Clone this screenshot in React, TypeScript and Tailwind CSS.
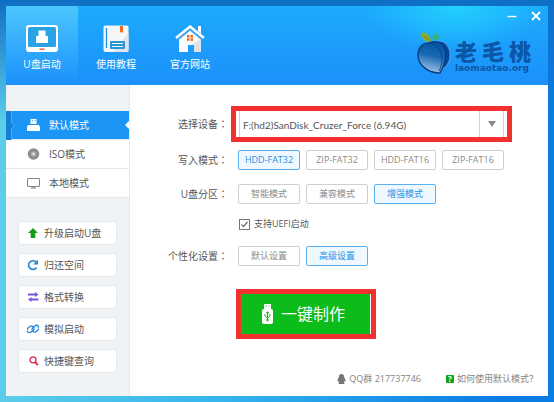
import { useState, type ReactNode } from "react";
import clsx from "clsx";

const modes = ["默认模式", "ISO模式", "本地模式"];
const writeModes = ["HDD-FAT32", "ZIP-FAT32", "HDD-FAT16", "ZIP-FAT16"];
const partitions = ["智能模式", "兼容模式", "增强模式"];
const settings = ["默认设置", "高级设置"];

function UsbScreenIcon() {
  return (
    <svg width="32" height="27" viewBox="0 0 32 27">
      <rect width="32" height="27" rx="3" fill="#fff" />
      <rect x="2" y="2" width="28" height="20" rx="1.5" fill="#2aa3e4" />
      <path d="M12.5 5.5h7v6h-7zM10 11h12v7H10z" fill="#fff" />
      <path d="M13.5 24.2h5" stroke="#e0703a" strokeWidth="1.6" />
    </svg>
  );
}

function BookIcon() {
  return (
    <svg width="26" height="27" viewBox="0 0 26 27">
      <path d="M2.5 0.5h21.5a1.5 1.5 0 0 1 1.5 1.5v23.5a1.5 1.5 0 0 1-1.5 1.5H2.5a2 2 0 0 1-2-2v-22.5a2 2 0 0 1 2-2z" fill="#f4f6f8" />
      <path d="M25.5 8v17.5a1.5 1.5 0 0 1-1.5 1.5H10z" fill="#dfe5ea" />
      <path d="M3.5 3v20" stroke="#1c8de0" strokeWidth="1.2" />
      <path d="M17 1h3v7l-1.5-1.5L17 8z" fill="#ee6a1f" />
      <rect x="7" y="16" width="15" height="8" rx="1" fill="#2a94d8" />
      <path d="M9 18.5h11M9 21.5h11" stroke="#fff" strokeWidth="1.2" />
    </svg>
  );
}

function HouseIcon() {
  return (
    <svg width="30" height="27" viewBox="0 0 30 27">
      <path d="M23 1h3v8l-3-3z" fill="#fff" />
      <path d="M4 13L15 4l11 9v14h-7v-7h-6v7H4z" fill="#fbfbfb" />
      <path d="M26 14v13h-7v-7h-3z" fill="#dde3e8" />
      <path d="M1 13L15 1.5 29 13" fill="none" stroke="#fff" strokeWidth="2.4" />
      <path d="M4 13.7L15 4.8l11 8.9" fill="none" stroke="#2a97e6" strokeWidth="1.2" />
      <path d="M12 10h2.5v2.5H12zM15.5 10H18v2.5h-2.5zM12 13.2h2.5v2.5H12zM15.5 13.2H18v2.5h-2.5z" fill="#ee6a1f" />
    </svg>
  );
}

function PeachLogo() {
  return (
    <svg width="34" height="44" viewBox="0 0 34 44">
      <defs>
        <linearGradient id="peach" x1="0.6" y1="0" x2="0.4" y2="1">
          <stop offset="0" stopColor="#0652a0" />
          <stop offset="0.45" stopColor="#1769b4" />
          <stop offset="1" stopColor="#a9c8e6" />
        </linearGradient>
      </defs>
      <path d="M19 12c7-3 14 3 14 13 0 8-5 14-10 14l-3-4z" fill="#06479a" stroke="#5cb2e8" strokeWidth="0.8" />
      <path d="M12 13c7-3 14-1 16 6 2 9-1 17-5 24C12 43 1 36 1 25c0-7 4-12 11-12z" fill="url(#peach)" stroke="#073c85" strokeWidth="1.4" />
      <path d="M12 13c6 0 13 6 13 15 0 6-1 9-3 13" fill="none" stroke="#073c85" strokeWidth="0.8" />
      <path d="M4 3c4-1 9 1 10 8-5 2-9-1-10-8z" fill="#93ad25" />
      <path d="M6 5l7 6" stroke="#4f7f23" strokeWidth="0.8" />
      <path d="M15 6c1 1 3 0 6-5 0 3 0 4-2 5 2 0 3-1 4-1-1 4-3 5-6 5z" fill="#38b46a" />
    </svg>
  );
}

function DriveIcon() {
  return (
    <svg width="13" height="12" viewBox="0 0 13 12" fill="currentColor">
      <path d="M3.5 0h6v5h-6zM1 6h11l1 2v4H0V8z" />
      <path d="M5 1.8h1M7.5 1.8h1" stroke="#1b96f5" />
    </svg>
  );
}

function DiscIcon() {
  return (
    <svg width="13" height="12" viewBox="0 0 13 12">
      <circle cx="6.5" cy="6" r="5.8" fill="#8d8d8d" />
      <circle cx="6.5" cy="6" r="2.5" fill="#b8b8b8" />
      <circle cx="6.5" cy="6" r="1" fill="#eee" />
    </svg>
  );
}

function MonitorIcon() {
  return (
    <svg width="13" height="12" viewBox="0 0 13 12" fill="none" stroke="#858585">
      <rect x="0.5" y="1.5" width="12" height="8" rx="0.5" />
      <path d="M4 11h5M5 10h3" />
    </svg>
  );
}

const modeIcons = [<DriveIcon />, <DiscIcon />, <MonitorIcon />];

const tabs = [
  { label: "U盘启动", icon: <UsbScreenIcon /> },
  { label: "使用教程", icon: <BookIcon /> },
  { label: "官方网站", icon: <HouseIcon /> },
];

const tools = [
  {
    label: "升级启动U盘",
    icon: <path d="M6 1l5 5H8.300v5H3.700V6H1z" fill="#159a1c" />,
  },
  {
    label: "归还空间",
    icon: (
      <g>
        <path d="M9.5 8.500A4.300 4.300 0 1 1 8.800 2.800" fill="none" stroke="#2688d8" strokeWidth="1.7" />
        <path d="M11 0.500v5H6.200z" fill="#2688d8" />
      </g>
    ),
  },
  {
    label: "格式转换",
    icon: (
      <g fill="#7a55e0">
        <path d="M1 2.500h7V1l3.500 2.500L8 6V4.500H1z" />
        <path d="M11.500 7.500h-7V6L1 8.500 4.500 11V9.500h7z" />
      </g>
    ),
  },
  {
    label: "模拟启动",
    icon: (
      <g fill="none" stroke="#2688d8" strokeWidth="1.3">
        <rect x="-0.300" y="3.800" width="7.500" height="5" rx="2.500" transform="rotate(-40 3.500 6.300)" />
        <rect x="4.800" y="3.200" width="7.500" height="5" rx="2.500" transform="rotate(-40 8.500 5.700)" />
      </g>
    ),
  },
  {
    label: "快捷键查询",
    icon: (
      <g fill="none" stroke="#d82458">
        <circle cx="6" cy="4.800" r="3" strokeWidth="1.3" />
        <path d="M8.200 7.200l2.600 3" strokeWidth="1.9" />
      </g>
    ),
  },
];

// The TC face centres the fullwidth colon in its box
function Colon() {
  return <span className="font-['Noto_Sans_CJK_TC',sans-serif]">：</span>;
}

function Row({ label, children }: { label: string; children: ReactNode }) {
  return (
    <div role="group" aria-label={label} className="flex h-5 items-center">
      <span className="w-[98px] shrink-0 text-right text-[10px]">
        {label}
        <Colon />
      </span>
      <div className="ml-2.5 flex gap-1.5">{children}</div>
    </div>
  );
}

function Options({ items, value, onChange }: { items: string[]; value: string; onChange: (v: string) => void }) {
  return items.map((item) => (
    <button
      key={item}
      onClick={() => onChange(item)}
      className={clsx(
        "h-5 w-[62px] rounded-xs border text-[9px] leading-4 whitespace-nowrap",
        item === value ? "border-[#5cb0f0] bg-[#eff8fe] text-[#2390e8]" : "border-[#cfcfcf] bg-white text-[#8a8a8a]"
      )}
    >
      {item}
    </button>
  ));
}

export default function App() {
  const [tab, setTab] = useState(0);
  const [mode, setMode] = useState(0);
  const [write, setWrite] = useState("HDD-FAT32");
  const [partition, setPartition] = useState("增强模式");
  const [setting, setSetting] = useState("高级设置");
  const [uefi, setUefi] = useState(true);

  return (
    <div className="flex min-h-screen flex-col bg-[linear-gradient(to_bottom,#0f6fc4_0%,#0f6fc400_30%),linear-gradient(to_right,#5ccdea,#35b4ee_40%,#0a7ce4_90%)] p-1.5 font-['Open_Sans','Noto_Sans_CJK_SC',sans-serif] text-[#555]">
      <div className="flex flex-1 flex-col bg-white">
        <header className="flex h-[79px] justify-between bg-[radial-gradient(ellipse_90px_45px_at_83%_0%,#22d0ff,#22d0ff00),linear-gradient(to_bottom,#1dabfc,#1c90fb)]">
          <nav className="flex gap-0.5">
            {tabs.map(({ label, icon }, i) => (
              <button
                key={label}
                onClick={() => setTab(i)}
                className={clsx(
                  "flex w-[72px] flex-col items-center pt-[19px] text-[10px] leading-4 text-white",
                  tab === i && "bg-linear-to-b from-[#4cc6fd] to-[#1c90fb]"
                )}
              >
                {icon}
                <span className="mt-1">{label}</span>
              </button>
            ))}
          </nav>
          <div className="flex flex-col items-end pr-[7px]">
            <div className="flex h-5 items-center gap-3.5 text-white">
              <button aria-label="最小化">
                <svg width="10" height="10" viewBox="0 0 10 10" stroke="currentColor" strokeWidth="1.4">
                  <path d="M0.5 5.5h9" />
                </svg>
              </button>
              <button aria-label="关闭">
                <svg width="10" height="10" viewBox="0 0 10 10" stroke="currentColor" strokeWidth="1.8">
                  <path d="M1 1l8 8M9 1l-8 8" />
                </svg>
              </button>
            </div>
            <div className="mt-1 mr-2.5 flex items-start gap-1 text-[#0b57a6]">
              <PeachLogo />
              <div className="pt-2">
                <p className="flex gap-[5px] font-['Noto_Sans_CJK_SC',sans-serif] text-[22px] leading-6 font-black">
                  <span>老</span>
                  <span>毛</span>
                  <span>桃</span>
                </p>
                <p className="font-['DejaVu_Sans',sans-serif] text-[9px] leading-3 font-bold">laomaotao.org</p>
              </div>
            </div>
          </div>
        </header>

        <div className="flex flex-1">
          <aside className="w-[124px] shrink-0 border-r border-[#e6e9ec] bg-[#f0f3f6] pt-[26px]">
            {modes.map((item, i) => (
              <button
                key={item}
                onClick={() => setMode(i)}
                className={clsx(
                  "relative flex h-[29px] w-full items-center gap-[9px] border-b border-[#e4e8eb] pl-[21px] text-[10px]",
                  mode === i ? "bg-[#1b96f5] text-white" : "bg-white text-[#555]"
                )}
              >
                {modeIcons[i]}
                {item}
                {mode === i && (
                  <>
                    <svg className="absolute top-0 left-0" width="9" height="29" viewBox="0 0 9 29">
                      <path d="M0 0h5.500v11L8 14.500 5.500 18v11H0z" fill="#1680d8" />
                      <path d="M5.500 0v11L8 14.500 5.500 18v11" fill="none" stroke="#5cb8f8" strokeWidth="0.8" />
                    </svg>
                    <svg className="absolute top-2.5 right-0" width="4" height="8" viewBox="0 0 4 8">
                      <path d="M4 0L0 4l4 4z" fill="#fff" />
                    </svg>
                  </>
                )}
              </button>
            ))}
            <div className="mx-3 mt-[23px] flex flex-col gap-2">
              {tools.map(({ label, icon }) => (
                <button
                  key={label}
                  className="flex h-6 items-center gap-[5px] rounded-sm border border-[#e6e9ec] bg-white pl-2 text-[10px] whitespace-nowrap"
                >
                  <svg className="shrink-0" width="12" height="12" viewBox="0 0 12 12">
                    {icon}
                  </svg>
                  {label}
                </button>
              ))}
            </div>
          </aside>

          <main className="flex flex-1 flex-col pt-[21px]">
            <div className="flex items-center">
              <label htmlFor="device" className="w-[98px] shrink-0 text-right text-[10px]">
                选择设备
                <Colon />
              </label>
              <div className="mr-9 ml-[3px] flex h-9 flex-1 border-5 border-[#f23030] px-[3px]">
                <div className="relative flex-1 border-x border-[#d0d0d0]">
                  <select
                    id="device"
                    className="h-full w-full appearance-none bg-transparent pl-[3px] font-['Lato',sans-serif] text-[10px] text-[#555] outline-none"
                  >
                    <option>F:(hd2)SanDisk_Cruzer_Force (6.94G)</option>
                  </select>
                  <span className="pointer-events-none absolute inset-y-0 right-0 flex w-6 items-center justify-center border-l border-[#d0d0d0]">
                    <svg width="8" height="6" viewBox="0 0 8 6">
                      <path d="M0 0h8L4 6z" fill="#8a8a8a" />
                    </svg>
                  </span>
                </div>
              </div>
            </div>

            <div className="mt-2 flex flex-col gap-3.5">
              <Row label="写入模式">
                <Options items={writeModes} value={write} onChange={setWrite} />
              </Row>
              <Row label="U盘分区">
                <Options items={partitions} value={partition} onChange={setPartition} />
              </Row>
            </div>
            <label className="mt-3.5 ml-[109px] flex h-3 items-center gap-1 text-[9px]">
              <span className="relative h-[11px] w-[11px]">
                <input
                  type="checkbox"
                  checked={uefi}
                  onChange={(e) => setUefi(e.target.checked)}
                  className="block h-[11px] w-[11px] appearance-none border border-[#777] bg-white"
                />
                {uefi && (
                  <svg className="pointer-events-none absolute inset-0" width="11" height="11" viewBox="0 0 11 11">
                    <path d="M2.500 5.500l2 2.200L8.500 3" fill="none" stroke="#666" strokeWidth="1.2" />
                  </svg>
                )}
              </span>
              支持UEFI启动
            </label>
            <div className="mt-4">
              <Row label="个性化设置">
                <Options items={settings} value={setting} onChange={setSetting} />
              </Row>
            </div>

            <div className="mt-[23px] ml-[106px] flex h-[50px] w-[140px] border-5 border-[#f23030] pr-px">
              <button className="flex flex-1 items-center justify-center gap-2 bg-[#0cbc1a] pr-1 text-[16px] text-white">
                <svg width="11" height="20" viewBox="0 0 11 20">
                  <path d="M2 0h7v5H2z" fill="#fff" />
                  <path d="M4 2h1M6.500 2h1" stroke="#0cbc1a" />
                  <rect y="5" width="11" height="15" rx="2" fill="#fff" />
                  <path d="M5.500 8v8M3 10v2l2.500 2M8 10v2l-2.500 2M4.500 9l1-1.300 1 1.300z" fill="none" stroke="#0cbc1a" />
                  <circle cx="5.500" cy="16" r="1.200" fill="#0cbc1a" />
                </svg>
                一键制作
              </button>
            </div>

            <footer className="mt-auto flex h-[34px] items-center justify-end gap-[25px] pr-2.5 text-[9px] text-[#858585]">
              <span className="flex items-center gap-[3px]">
                <svg width="9" height="10" viewBox="0 0 9 10" fill="#777">
                  <path d="M4.500 0C2.600 0 1.700 1.300 1.800 3.500.700 5 .200 6.500.500 7.500c.300.300.700-.200 1-.500.100.700.400 1 .700 1.400-1 .400-1 1.600 0 1.600h4.600c1 0 1-1.200 0-1.600.300-.400.600-.700.700-1.400.300.300.700.800 1 .500.300-1-.200-2.500-1.300-4C7.300 1.300 6.400 0 4.500 0z" />
                </svg>
                QQ群 217737746
              </span>
              <a href="#" className="flex items-center gap-[3px]">
                <span className="flex h-2 w-2 items-center justify-center rounded-[1px] bg-[#0aa514] text-[8px] font-bold text-white">?</span>
                如何使用默认模式？
              </a>
            </footer>
          </main>
        </div>
      </div>
    </div>
  );
}
